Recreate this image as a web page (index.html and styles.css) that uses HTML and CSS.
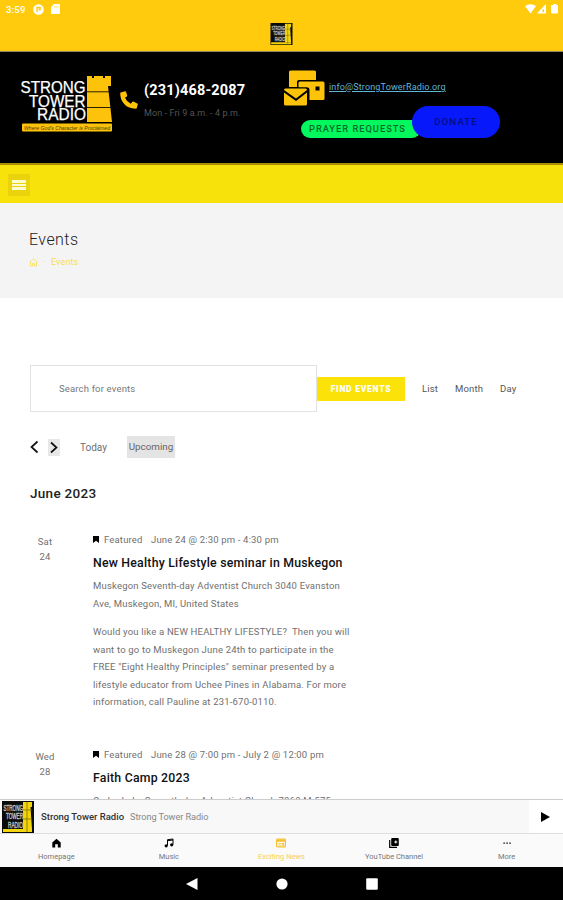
FILE: index.html
```html
<!DOCTYPE html>
<html lang="en">
<head>
<meta charset="utf-8">
<title>Strong Tower Radio - Events</title>
<link rel="stylesheet" href="styles.css">
</head>
<body>
<svg class="defs" width="0" height="0" aria-hidden="true">
  <symbol id="cover" viewBox="0 0 32 32">
    <rect width="32" height="32" fill="#0b0b08"/>
    <path d="M21 1h9v5h-1.500l1.500 22H21z" fill="#f3d50b"/>
    <path d="M1 28h29v3H1z" fill="#f3d50b"/>
    <path d="M21 9h9M21 18h9M25 1v30" stroke="#6f6200" stroke-width=".7"/>
    <g font-family="Liberation Sans" font-size="9" fill="#bbb" stroke="#bbb" stroke-width=".5" text-anchor="end">
      <text x="21" y="9.500" textLength="19.500" lengthAdjust="spacingAndGlyphs">STRONG</text>
      <text x="21" y="18" textLength="17" lengthAdjust="spacingAndGlyphs">TOWER</text>
      <text x="21" y="26.500" textLength="15" lengthAdjust="spacingAndGlyphs">RADIO</text>
    </g>
  </symbol>
  <symbol id="flag" viewBox="0 0 6 7"><path d="M0 0h6v7L3 4.800 0 7z"/></symbol>
</svg>

<header class="appbar">
  <div class="status">
    <span class="clock">3:59</span>
    <svg class="st-a" width="11" height="11" viewBox="0 0 11 11"><circle cx="5.500" cy="5.500" r="5.300" fill="#fff"/><path d="M4 8V3.500h3.200v2H5.500" fill="none" stroke="#ffcb0c" stroke-width="1.300"/></svg>
    <svg class="st-b" width="9" height="10" viewBox="0 0 9 10"><path d="M3 0h5q1 0 1 1v8q0 1-1 1H1q-1 0-1-1V3z" fill="#fff"/><path d="M3.500 2v1.500M5.200 2v1.500M7 2v1.500" stroke="#ffcb0c" stroke-width=".6"/></svg>
    <svg class="st-c" width="33" height="10" viewBox="0 0 33 10" fill="#fff"><path d="M0 2Q5.500-1.500 11 2L5.500 9.500z"/><path d="M21 0v9.500H11.800z"/><path d="M17.500 5.500h1.500v2.500h-1.500z" fill="#ffcb0c"/><path d="M27 1h1.500V0h3v1H32q1 0 1 1v6.500q0 1-1 1h-5q-1 0-1-1V2q0-1 1-1z"/></svg>
  </div>
  <svg class="brand" width="23" height="22"><use href="#cover" width="23" height="22"/></svg>
</header>

<section class="masthead">
  <svg class="logo" width="93" height="58" viewBox="0 0 93 58">
    <g font-family="Liberation Sans" font-size="16.500" fill="#fff" stroke="#fff" stroke-width=".25" text-anchor="end">
      <text x="65.500" y="17.500" textLength="65" lengthAdjust="spacingAndGlyphs">STRONG</text>
      <text x="65.500" y="31.500" textLength="56.500" lengthAdjust="spacingAndGlyphs">TOWER</text>
      <text x="66" y="45" textLength="49" lengthAdjust="spacingAndGlyphs">RADIO</text>
    </g>
    <path d="M67 1h5v2h2V1h9v2h2V1h6v10h-3l4 36H67z" fill="#fdc30a"/>
    <path d="M67 16.800h22M67 32.500h24" stroke="#2a2000" stroke-width="1"/>
    <rect x="2" y="48.500" width="90" height="8" rx="1" fill="#fdc30a"/>
    <text x="4" y="54.800" textLength="86" lengthAdjust="spacingAndGlyphs" font-family="Liberation Sans" font-style="italic" font-size="6" fill="#4a3a00">Where God's Character is Proclaimed</text>
  </svg>
  <svg class="phone" width="18" height="18" viewBox="0 0 18 18"><path d="M.8 1.500L5 .2q.7-.1 1 .5l1.200 3.800q.2.700-.4 1.100L5 6.800q1.800 4.200 5.800 6l1.400-1.900q.4-.6 1.100-.3l4 1.800q.6.300.5 1l-1 3.600q-.2.800-1 .8Q7.500 17.500 3.800 12.500.2 8.500.2 2.300q0-.6.600-.8z" fill="#fdc30a"/></svg>
  <div class="call">
    <strong>(231)468-2087</strong>
    <span>Mon - Fri 9 a.m. - 4 p.m.</span>
  </div>
  <div class="contact">
    <div class="mail">
      <svg width="41" height="36" viewBox="0 0 41 36"><path d="M6.500.5h24q1.500 0 1.500 1.500v8H15q-2 0-2 2v5H5V2Q5 .5 6.500.5z" fill="#fdc30a"/><path d="M16 11.500h23q1.500 0 1.500 1.500v15.500q0 1.500-1.500 1.500H25.500V20q0-2.800-3-2.800h-8V13q0-1.500 1.500-1.500z" fill="#fdc30a"/><rect x="31.500" y="16.500" width="4" height="4" fill="#000"/><path d="M1.500 18.500h20q1.500 0 1.500 1.500L12 28.500 0 20q0-1.500 1.500-1.500z" fill="#fdc30a"/><path d="M0 22.500L12 31l11-8.500V34q0 1.500-1.500 1.500h-20Q0 35.500 0 34z" fill="#fdc30a"/></svg>
      <a>info@StrongTowerRadio.org</a>
    </div>
    <div class="actions"><span class="prayer">PRAYER REQUESTS</span><span class="donate">DONATE</span></div>
  </div>
</section>

<nav class="menubar"><span class="burger"><i></i><i></i><i></i></span></nav>

<section class="pagehead">
  <h1>Events</h1>
  <div class="crumbs">
    <svg width="9" height="9" viewBox="0 0 9 9"><path d="M.5 4.500L4.500.8l4 3.700M1.500 4v4h2V5.500h2V8h2V4" fill="none" stroke="#f8dd55" stroke-width=".8"/></svg>
    <span class="sep">·</span><span>Events</span>
  </div>
</section>

<main>
  <div class="searchrow">
    <div class="search">Search for events</div>
    <span class="find">FIND EVENTS</span>
    <span class="v1">List</span><span class="v2">Month</span><span class="v3">Day</span>
  </div>
  <div class="pager">
    <svg width="9" height="14" viewBox="0 0 9 14"><path d="M7.500 1.500L1.500 7l6 5.500" fill="none" stroke="#111" stroke-width="1.700"/></svg>
    <span class="next"><svg width="8" height="13" viewBox="0 0 8 13"><path d="M1 1.500l5.500 5L1 11.500" fill="none" stroke="#111" stroke-width="1.700"/></svg></span>
    <span class="today">Today</span>
    <span class="upcoming">Upcoming</span>
  </div>
  <h2>June 2023</h2>

  <article>
    <div class="date">Sat<br>24</div>
    <div class="info">
      <div class="meta"><svg width="6" height="7"><use href="#flag"/></svg><span class="feat">Featured</span><span>June 24 @ 2:30 pm - 4:30 pm</span></div>
      <h3>New Healthy Lifestyle seminar in Muskegon</h3>
      <p>Muskegon Seventh-day Adventist Church 3040 Evanston<br>Ave, Muskegon, MI, United States</p>
      <p class="desc">Would you like a NEW HEALTHY LIFESTYLE?&nbsp; Then you will<br>want to go to Muskegon June 24th to participate in the<br>FREE "Eight Healthy Principles" seminar presented by a<br>lifestyle educator from Uchee Pines in Alabama. For more<br>information, call Pauline at 231-670-0110.</p>
    </div>
  </article>
  <article>
    <div class="date">Wed<br>28</div>
    <div class="info">
      <div class="meta"><svg width="6" height="7"><use href="#flag"/></svg><span class="feat">Featured</span><span>June 28 @ 7:00 pm - July 2 @ 12:00 pm</span></div>
      <h3>Faith Camp 2023</h3>
      <p>Cedar Lake Seventh-day Adventist Church 7060 M-575</p>
    </div>
  </article>
</main>

<div class="player">
  <svg width="32" height="32"><use href="#cover" width="32" height="32"/></svg>
  <b>Strong Tower Radio</b><span>Strong Tower Radio</span>
  <div class="play"><svg width="9" height="10" viewBox="0 0 9 10"><path d="M0 0l9 5-9 5z"/></svg></div>
</div>
<div class="tabs">
  <div><svg width="9" height="9" viewBox="0 0 9 9"><path d="M4.500.3L8.700 4v5H5.800V5.800H3.200V9H.3V4z"/></svg><span>Homepage</span></div>
  <div><svg width="10" height="9" viewBox="0 0 10 9"><path d="M3.500 7V1.200L9 .5V6M3.500 2.200L9 1.500" fill="none" stroke="#000" stroke-width="1"/><circle cx="2.200" cy="7.300" r="1.600"/><circle cx="7.700" cy="6.300" r="1.600"/></svg><span>Music</span></div>
  <div class="on"><svg width="10" height="9" viewBox="0 0 10 9"><rect x=".6" y=".6" width="8.800" height="7.800" rx="1" fill="none" stroke="#f5c12e" stroke-width="1.200"/><path d="M1 1h8v2.300H1zM2.300 4.700h3v.9h-3zM2.300 6.300h3v.8h-3zM6.200 4.500h1.800v2.700H6.200z" fill="#f5c12e"/></svg><span>Exciting News</span></div>
  <div><svg width="10" height="10" viewBox="0 0 10 10"><path d="M.7 2v7.300H8" fill="none" stroke="#000" stroke-width="1.200"/><rect x="2.200" width="7.600" height="8" rx="1"/><path d="M5.300 4h3M6.800 2.500v3" stroke="#fff" stroke-width="1"/></svg><span>YouTube Channel</span></div>
  <div><svg width="8" height="9" viewBox="0 0 8 9"><path d="M.3 4h1.800v1.300H.3zM3.200 4H5v1.300H3.200zM6.100 4h1.800v1.300H6.100z" fill="#333"/></svg><span>More</span></div>
</div>
<footer class="sysnav">
  <svg width="12" height="12" viewBox="0 0 12 12"><path d="M11.500 0v12L0 6z" fill="#fff"/></svg>
  <svg width="12" height="12" viewBox="0 0 12 12"><circle cx="6" cy="6" r="5.600" fill="#fff"/></svg>
  <svg width="12" height="12" viewBox="0 0 12 12"><rect x=".2" y=".2" width="11.600" height="11.600" rx="1" fill="#fff"/></svg>
</footer>
</body>
</html>
```

FILE: styles.css
```css
* { box-sizing: border-box; }
body { margin: 0; width: 563px; height: 900px; overflow: hidden; display: flex; flex-direction: column; background: #fff; font-family: Roboto, "Liberation Sans", sans-serif; font-size: 9.5px; color: #707070; white-space: nowrap; }
body > * { flex: none; }
svg { display: block; flex: none; }
.defs { position: absolute; }
h1, h2, h3, p { margin: 0; }

.appbar { height: 52px; background: #ffcb0c; border-bottom: 1px solid #8d8460; }
.status { height: 22px; padding: 0 5px 4px 6px; display: flex; align-items: center; color: #fff; }
.clock { font-size: 9.5px; font-weight: 500; width: 27px; letter-spacing: .2px; }
.st-b { margin-left: 7px; }
.st-c { margin-left: auto; }
.brand { margin: 1px 0 0 270px; }

.masthead { height: 113px; background: #000; border-bottom: 2px solid #a98d05; display: flex; align-items: flex-start; }
.logo { margin: 23px 0 0 20px; }
.phone { margin: 39px 0 0 7px; }
.call { margin: 29px 0 0 6px; width: 140px; display: flex; flex-direction: column; }
.call strong { color: #fff; font-size: 14.5px; line-height: 20px; font-weight: 700; letter-spacing: .17px; }
.call span { color: #555; font-size: 9px; line-height: 12px; margin-top: 6px; letter-spacing: .1px; }
.contact { padding-top: 18px; }
.mail { display: flex; }
.mail a { margin: 11px 0 0 4px; font-size: 9px; line-height: 13px; color: #63b5d6; text-decoration: underline; letter-spacing: .15px; }
.actions { display: flex; margin-left: 17px; align-items: flex-start; }
.prayer { margin-top: 14px; width: 120px; height: 18px; border-radius: 9px; background: #02f85c; color: #066c2b; padding-left: 8px; font: 500 9.300px/18px Roboto, sans-serif; letter-spacing: 1.300px; letter-spacing: .98px; }
.donate { margin-left: -9px; width: 88px; height: 32px; border-radius: 16px; background: #0719fb; color: #050d86; text-align: center; font: 500 9.800px/32px Roboto, sans-serif; letter-spacing: 1px; z-index: 1; }

.menubar { height: 38px; background: #f7e20c; padding: 9px 0 0 8px; }
.burger { display: flex; flex-direction: column; width: 22px; height: 22px; background: #e8d30c; padding: 6px 4px; gap: 1px; }
.burger i { height: 3px; background: #fffbd0; }

.pagehead { height: 95px; background: #f4f4f5; padding: 26px 0 0 29px; }
.pagehead h1 { font-size: 16px; line-height: 21px; font-weight: 300; color: #222; letter-spacing: .45px; }
.crumbs { display: flex; align-items: center; margin-top: 6px; height: 12px; color: #f8dd55; font-size: 9px; letter-spacing: .1px; }
.sep { width: 13px; padding-left: 5px; }

main { height: 501px; overflow: hidden; padding: 67px 0 0 30px; }
.searchrow { display: flex; align-items: center; height: 47px; color: #555; letter-spacing: .16px; }
.search { width: 287px; height: 47px; border: 1px solid #e2e2e2; padding-left: 28px; line-height: 45px; color: #777; }
.find { width: 88px; height: 24px; background: #fbe309; color: #fff; text-align: center; font-size: 8.500px; line-height: 24px; font-weight: 900; letter-spacing: .75px; }
.v1 { width: 33px; margin-left: 17px; }
.v2 { width: 45px; }
.pager { display: flex; align-items: center; height: 22px; margin-top: 24px; }
.next { width: 12px; height: 17px; margin-left: 9px; background: #e8e8e8; display: grid; place-items: center; }
.today { margin-left: 20px; width: 47px; font-size: 10px; }
.upcoming { width: 48px; height: 22px; line-height: 22px; background: #e4e4e4; text-align: center; color: #666; font-size: 9.800px; }
h2 { font-size: 13.500px; line-height: 18px; margin-top: 26px; color: #222; font-weight: 500; letter-spacing: .3px; }
article { display: flex; margin-top: 30px; height: 184px; letter-spacing: .17px; }
article + article { margin-top: 31px; height: 60px; }
.date { width: 30px; text-align: center; line-height: 15px; padding-top: 2px; margin-right: 33px; }
.meta { display: flex; align-items: center; height: 14px; }
.feat { margin-left: 5px; width: 47px; }
.meta svg { fill: #000; }
h3 { font-size: 12.300px; line-height: 18px; margin: 8px 0 5px; color: #111; font-weight: 500; letter-spacing: .22px; }
p { font-size: 9.500px; line-height: 17.500px; letter-spacing: .19px; }
.desc { margin-top: 11px; }

.player { height: 34px; background: #f8f8f8; border-top: 1px solid #ccc; display: flex; align-items: center; padding-left: 2px; color: #888; }
.player b { margin-left: 7px; width: 89px; font-weight: 500; color: #333; }
.player span { font-size: 9.200px; letter-spacing: -.08px; }
.play { margin-left: auto; width: 34px; height: 33px; background: #fff; display: flex; align-items: center; padding-left: 12px; }
.tabs { height: 34px; background: #fafafa; border-top: 1px solid #ddd; display: grid; grid-template-columns: repeat(5, 1fr); font-size: 7.500px; color: #777; }
.tabs div { display: flex; flex-direction: column; align-items: center; padding-top: 4px; }
.tabs svg { height: 10px; }
.tabs span { line-height: 10px; margin-top: 4px; }
.tabs .on { color: #f8cf60; }
.sysnav { height: 33px; background: #000; display: flex; justify-content: center; align-items: center; gap: 78px; }
```
